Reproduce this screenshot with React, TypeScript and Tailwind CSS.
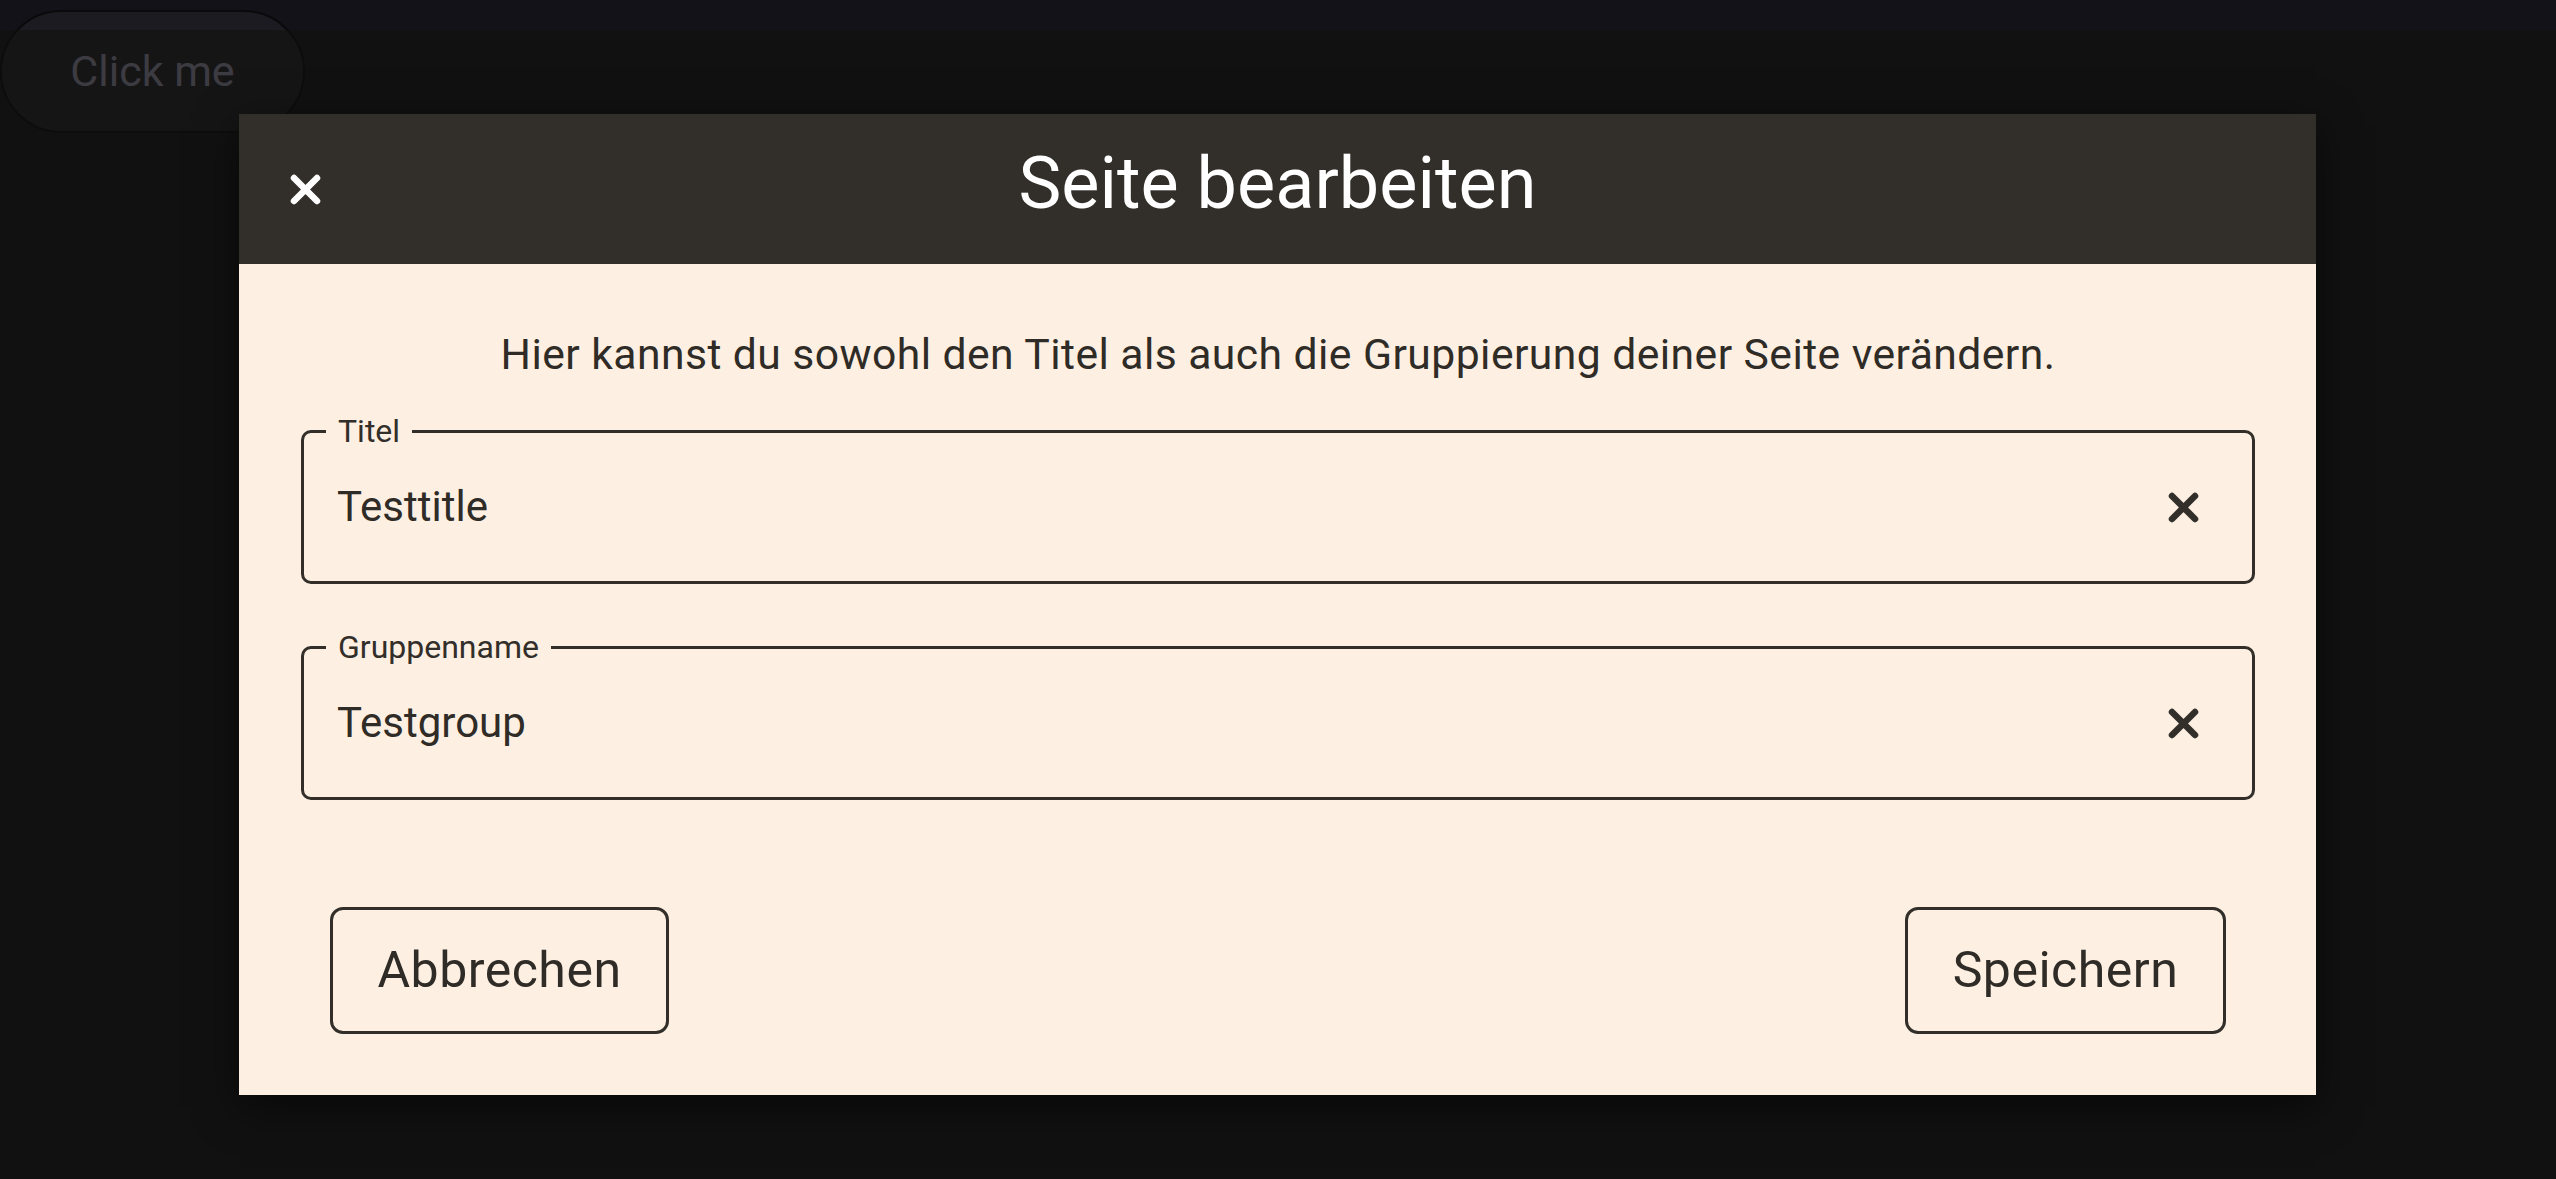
import React from "react";

function XIcon({ className, stroke }: { className?: string; stroke: string }) {
  return (
    <svg viewBox="0 0 31 31" className={className} fill="none">
      <path d="M4 4 L27 27 M27 4 L4 27" stroke={stroke} strokeWidth="6.5" strokeLinecap="round" />
    </svg>
  );
}

function Field({ label, value }: { label: string; value: string }) {
  return (
    <div className="relative h-[154px] rounded-[10px] border-[3px] border-[#322e29] flex items-center pl-[33px] pr-[53px]">
      <span className="absolute left-[22px] top-[-22px] px-[12px] bg-[#fdefe2] text-[32px] leading-[40px] text-[#322e29]">
        {label}
      </span>
      <span className="flex-1 text-[42px] leading-[50px] text-[#2f2b26]">{value}</span>
      <XIcon className="w-[31px] h-[31px]" stroke="#322e29" />
    </div>
  );
}

export default function App() {
  return (
    <div className="relative w-full h-[1179px] overflow-hidden bg-[#131218] font-['Roboto',sans-serif]">
      <div className="pt-[10px]">
        <button className="h-[123px] w-[305px] rounded-full bg-[#1c1b21] border-2 border-[#0a0a0c] text-[43px] text-[#6b6779]">
          Click me
        </button>
      </div>

      <div className="absolute left-0 right-0 top-[30px] bottom-0 bg-[rgba(16,16,12,0.5)]" />

      <div className="absolute left-[239px] top-[114px] w-[2077px] shadow-[0_12px_40px_rgba(0,0,0,0.55)]">
        <div className="relative h-[150px] bg-[#322f2a] flex items-center justify-center">
          <button className="absolute left-[51px] top-[60px] w-[31px] h-[31px]">
            <XIcon className="w-[31px] h-[31px]" stroke="#ffffff" />
          </button>
          <h2 className="text-[72px] leading-[80px] text-white font-normal mb-[10px]">Seite bearbeiten</h2>
        </div>
        <div className="bg-[#fdefe2] pl-[62px] pr-[61px] pt-[59px] pb-[61px]">
          <p className="text-center text-[42.7px] leading-[63px] text-[#2f2b26] tracking-[0.01em]">
            Hier kannst du sowohl den Titel als auch die Gruppierung deiner Seite verändern.
          </p>
          <div className="mt-[44px] flex flex-col gap-[62px]">
            <Field label="Titel" value="Testtitle" />
            <Field label="Gruppenname" value="Testgroup" />
          </div>
          <div className="mt-[107px] flex justify-between px-[29px]">
            <button className="h-[127px] w-[339px] rounded-[13px] border-[3px] border-[#322e29] text-[50px] tracking-[0.01em] text-[#2f2b26]">
              Abbrechen
            </button>
            <button className="h-[127px] w-[321px] rounded-[13px] border-[3px] border-[#322e29] text-[50px] tracking-[0.01em] text-[#2f2b26]">
              Speichern
            </button>
          </div>
        </div>
      </div>
    </div>
  );
}
